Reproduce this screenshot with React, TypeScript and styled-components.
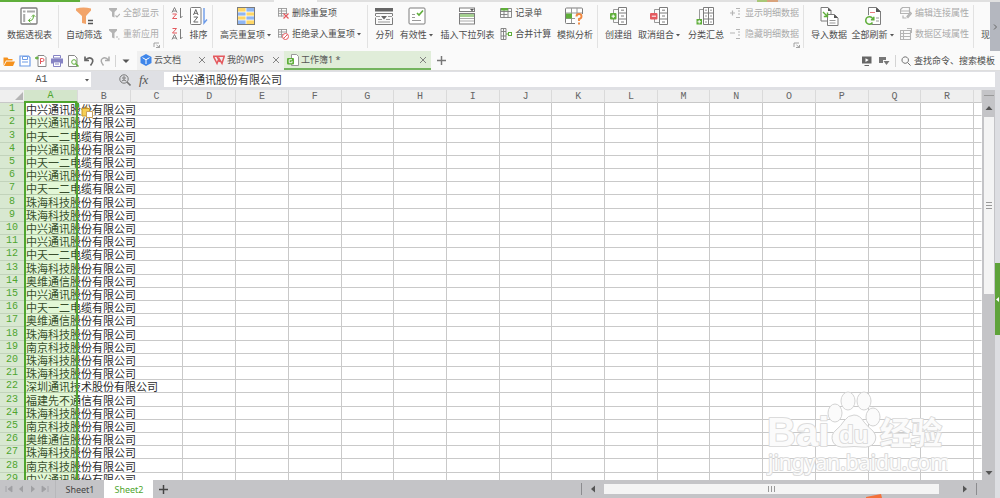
import React from "react";
import styled, { createGlobalStyle } from "styled-components";

const GREEN = "#4fa52f";
const UI = `"Noto Sans", "Noto Sans CJK SC", sans-serif`;
const CJK = `"Noto Sans CJK SC", sans-serif`;
const MONO = `"Liberation Mono", monospace`;

const Global = createGlobalStyle`
  * { box-sizing: border-box; }
  body { margin: 0; background: #fafafa; font-family: ${CJK}; font-size: 9px; color: #4c4c4c; overflow: hidden; }
  button, input { font: inherit; color: inherit; border: 0; padding: 0; margin: 0; background: none; outline: none; border-radius: 0; }
`;

/* ---------- icons ---------- */

const g = "#7c7c7c";
const gl = "#b4b4b4";
const gr = "#5fae3a";
const red = "#e4595e";

const art: Record<string, React.ReactNode> = {
  pivot: (
    <>
      <rect x="1" y="1" width="16" height="16" rx="1" fill="#fff" stroke={g} strokeWidth="1.300" />
      <path d="M3 4.500h2.500M7 4.500h8M4.200 7v8" stroke="#aaa" strokeWidth="2" />
      <path d="M8.500 13.500q5 1 5-5M11.700 9.800l1.800-2 1.800 2M10.400 11.500l-2 2 2 1.800" fill="none" stroke={gr} />
    </>
  ),
  filter: (
    <>
      <path d="M1 1.500q7.500-2 15 0v2L11 9v8l-4-1V9L1 3.500z" fill="#f2a46a" />
      <path d="M13 13.500h5M13 16.500h5" stroke="#555" strokeWidth="1.300" />
    </>
  ),
  filterAll: (
    <>
      <path d="M1 1h8v1.500L6.500 5v5.500L4 9.500V5L1 2.500z" fill={gl} />
      <path d="M7.500 8.500L9 10l3-3" fill="none" stroke={gl} strokeWidth="1.200" />
    </>
  ),
  filterRe: (
    <>
      <path d="M1 1h8v1.500L6.500 5v5.500L4 9.500V5L1 2.500z" fill={gl} />
      <path d="M8 9h2M10 11h1.500" fill="none" stroke={gl} strokeWidth="1.200" />
    </>
  ),
  sortAsc: (
    <>
      <path d="M1 5.500L3.500.5 6 5.500M2 4h3" fill="none" stroke="#777" strokeWidth=".9" />
      <path d="M1.500 7h4l-4 4.500h4.500" fill="none" stroke={red} />
      <path d="M9.500 1v10l2-2" fill="none" stroke={g} />
    </>
  ),
  sortDesc: (
    <>
      <path d="M1.500.5h4L1.500 5h4.500" fill="none" stroke={red} />
      <path d="M1 11.500l2.500-5 2.500 5M2 10h3" fill="none" stroke="#777" strokeWidth=".9" />
      <path d="M9.500 1v10l2-2" fill="none" stroke={g} />
    </>
  ),
  sort: (
    <>
      <rect x="1.500" y=".5" width="10.500" height="17" rx="1" fill="#fff" stroke={g} />
      <path d="M4.500 8l2.300-5.500L9.100 8M5.200 6.300h3.200M4.700 10h4l-4 5h4.500" fill="none" stroke="#666" />
      <path d="M15 1v15l3-3.500" fill="none" stroke="#6c9be8" strokeWidth="1.400" />
    </>
  ),
  highlight: (
    <>
      <rect x=".5" y=".5" width="17" height="17" fill="#8fb6f4" stroke={g} />
      <path d="M1 1h8v4H1zM9 5h8v4H9zM1 9h8v4H1zM9 13h8v4H9z" fill="#ffd766" />
      <path d="M1 5h16M1 9h16M1 13h16M9 1v16" stroke="#fff" strokeWidth=".8" />
    </>
  ),
  dupDel: (
    <>
      <path d="M1 1.500h9M1 4h9M1 6.500h9M1 9h6M1.500 1v8.500M4.500 1v8.500M9.500 1v6" fill="none" stroke="#999" strokeWidth=".9" />
      <path d="M6.500 6.500l5 5M11.500 6.500l-5 5" stroke={red} strokeWidth="1.200" />
    </>
  ),
  dupReject: (
    <>
      <path d="M1 1.500h9M1 4h9M1 6.500h5M1 9h4M1.500 1v8.500M4.500 1v8.500M9.500 1v4" fill="none" stroke="#999" strokeWidth=".9" />
      <circle cx="8.500" cy="8.500" r="3" fill="#fff" stroke={red} />
      <path d="M6.500 10.500l4-4" stroke={red} />
    </>
  ),
  split: (
    <>
      <path d="M0 1h18v3.500H0z" fill="#666" />
      <path d="M.5 9V6.500h17V9M.5 10.500v7h17v-7" fill="none" stroke={g} />
      <path d="M1 9.500h4M13 9.500h4M3 12.500h4M11 12.500h4M3 15h12" stroke="#999" />
      <path d="M6 9h6l-3 3.500z" fill="#666" />
    </>
  ),
  valid: (
    <>
      <rect x="1" y="1" width="16" height="16" rx="1" fill="#fff" stroke={g} />
      <path d="M4 7.500h3M4 10.500h3M4 13.500h9" stroke="#999" fill="none" />
      <path d="M9 6l2 2 4-4.500" fill="none" stroke={gr} strokeWidth="1.600" />
    </>
  ),
  dropList: (
    <>
      <rect x="1.500" y="1" width="15" height="3.500" fill="#fff" stroke={g} />
      <path d="M12 2h4l-2 2.300z" fill="#555" />
      <rect x="1.500" y="6.500" width="15" height="10.500" fill="#fff" stroke={g} />
      <path d="M2 7h14v3H2z" fill="#a5cf91" />
      <path d="M2 11.500h14M2 14h14" stroke="#aaa" />
    </>
  ),
  record: (
    <>
      <path d="M.5 1.500h11v9H.5zM.5 4.500h11M.5 7.500h7M4 2v8.500M8 2v8.500" fill="none" stroke={g} strokeWidth=".9" />
      <path d="M1 1h7v2.500H1z" fill={gr} />
    </>
  ),
  merge: (
    <>
      <path d="M1 .5h5v11H1zM1 3.500h5M1 8h5M3.500.5v11" fill="none" stroke={g} strokeWidth=".9" />
      <path d="M6 6h2" stroke={gr} />
      <rect x="8.500" y="4.500" width="3" height="3" fill="#fff" stroke={gr} />
    </>
  ),
  whatif: (
    <>
      <rect x=".5" y="1" width="17" height="15.500" rx="1" fill="#fff" stroke={g} />
      <path d="M1 6h16M1 11.500h10M6.500 1v15M12 1v6" stroke="#999" />
      <path d="M1 6.500h6v5H1z" fill={gr} />
      <path d="M10 7h8v11h-8z" fill="#fafafa" />
      <path d="M11.500 9.500q0-2.500 2.500-2.500t2.500 2.300-2.500 2.700v2M14 15.500v2" fill="none" stroke="#f0873e" strokeWidth="1.900" />
    </>
  ),
  group: (
    <>
      <path d="M9.500.5h8v17h-8zM9.500 6h8M9.500 12h8M12 3.200h3M12 9h3M12 15h3" fill="#fff" stroke={g} />
      <path d="M9 2.500H4.500V6M4.500 12v3.500H9" fill="none" stroke="#999" />
      <rect x="1" y="6" width="6.500" height="6.500" rx="1" fill={gr} />
      <path d="M2.500 9.200h3.500M4.200 7.500V11" stroke="#fff" />
    </>
  ),
  ungroup: (
    <>
      <path d="M9.500.5h8v17h-8zM9.500 6h8M9.500 12h8M12 3.200h3M12 9h3M12 15h3" fill="#fff" stroke={g} />
      <path d="M9 2.500H4.500V6M4.500 12v3.500H9" fill="none" stroke="#999" />
      <rect x="0" y="6" width="7.500" height="6.500" rx="1" fill={red} />
      <path d="M1.800 9.200H6" stroke="#fff" />
    </>
  ),
  subtotal: (
    <>
      <path d="M7.500.5h10v17h-10zM7.500 6h10M7.500 12h10M12.500 .5v17" fill="#fff" stroke={g} />
      <path d="M9 3.200h2M9 9h2M9 15h2M14 3.200h2M14 9h2M14 15h2" stroke="#999" />
      <path d="M7 2.500H3.500V12" fill="none" stroke="#999" />
      <rect x=".5" y="12" width="5.500" height="5.500" fill={gr} />
      <path d="M1.500 14.800H5M3.200 13v3.500" stroke="#fff" />
    </>
  ),
  showDetail: <path d="M0 6h5M2.500 3.500v5M6 1.500h4M8 4h2M8 7h2M6 10.500h4" stroke={gl} strokeWidth="1.200" />,
  hideDetail: <path d="M0 5h5M6 1.500h4M8 4h2M8 7h2M6 10.500h4" stroke={gl} strokeWidth="1.200" />,
  importData: (
    <>
      <path d="M1 .5h7l3 3V14H1z" fill="#fff" stroke={g} />
      <path d="M7.500 7.500h7l3.500 3.500v7.500H7.500z" fill="#fff" stroke={g} />
      <path d="M8 .5V4h3.500zM14 7.500V11h4z" fill="#555" />
      <path d="M3 5l4 4M7.500 5.500V9.500H3.800" fill="none" stroke={gr} strokeWidth="1.400" />
      <path d="M9.500 13.500h6M9.500 16h6" stroke="#999" />
    </>
  ),
  refresh: (
    <>
      <path d="M4.500.5h8l4 4v13h-12z" fill="#fff" stroke={g} />
      <path d="M12 .5V5h5z" fill="#555" />
      <path d="M6 5.500h5" stroke={red} strokeWidth=".8" />
      <path d="M12 11h3M12 14h3" stroke="#999" />
      <circle cx="5.500" cy="13" r="5" fill="#fafafa" />
      <path d="M9 12.500a3.700 3.700 0 1 0-.5 3M9.800 9.800v3H6.900" fill="none" stroke={gr} strokeWidth="1.500" />
    </>
  ),
  connProp: <path d="M.5 2.500l2-2h7v6h-9zM.5 4h9M3 8.500v2.500h3.500M7 9.500l3.500-4 1 1-3.500 4z" fill="none" stroke={gl} strokeWidth="1.200" />,
  areaProp: <path d="M.5 2.500h10v9H.5zM3.500 2.500v9M.5 5.500h10M.5 8.500h10M7 .5h4.500V5" fill="none" stroke={gl} strokeWidth="1.100" />,
  open: <path d="M.5 10.500v-8h4l1 1.500h4v1.500H3zM3.500 6.500h8.500l-2 4.500H1z" fill="#f5921e" />,
  save: (
    <>
      <path d="M1 1h8.500L11 2.500V11H1z" fill="#fff" stroke="#6d9be6" strokeWidth="1.200" />
      <path d="M3.500 1.500h5v3h-5zM3 7h6" fill="none" stroke="#6d9be6" />
    </>
  ),
  pdf: (
    <>
      <path d="M3 .5h6l2 2v9H3z" fill="#fff" stroke="#888" />
      <path d="M5.500 9V3.500h2q1.500 0 1.500 1.500T7.500 6.500h-2" fill="none" stroke={red} />
      <path d="M0 3h3.500M2 1.500v3" stroke={gr} strokeWidth="1.300" />
    </>
  ),
  print: (
    <>
      <path d="M0 3.500h12v5H0z" fill="#8583c4" />
      <path d="M2.500.5h7V3h-7zM2.500 7h7v4.500h-7z" fill="#fff" stroke="#8583c4" />
      <path d="M4 9h4" stroke="#8583c4" />
    </>
  ),
  preview: (
    <>
      <path d="M1.500.5h6l2.500 2.500v8.500h-8.500z" fill="#fff" stroke="#888" />
      <circle cx="7" cy="7" r="2.300" fill="#fff" stroke={gr} />
      <path d="M8.700 8.700l2.800 2.800" stroke={gr} strokeWidth="1.500" />
    </>
  ),
  undo: <path d="M2 1.500v4h4M2.500 5q3-3.500 6-1.500t-1 7" fill="none" stroke="#666" strokeWidth="1.700" />,
  redo: <path d="M10 1.500v4H6M9.500 5q-3-3.500-6-1.500t1 7" fill="none" stroke="#aaa" strokeWidth="1.500" />,
  cloud: (
    <>
      <path d="M6 0l5.500 3v6L6 12 .5 9V3z" fill="#3f86ea" />
      <path d="M2.500 3.700L6 5.700l3.500-2M6 5.700V10" fill="none" stroke="#fff" />
    </>
  ),
  wps: <path d="M.3 2.200h10.900L9 9.500 6 4.500 4 9.500zM3.800 2.200L6.800 8" fill="none" stroke={red} strokeWidth="1.500" />,
  sheet: (
    <>
      <path d="M4.500.5h5l2 2v9h-7z" fill="#fff" stroke="#999" />
      <rect x="0" y="4" width="7" height="6.500" rx="1" fill={gr} />
      <path d="M5 5.700H2.200v3H5V7" fill="none" stroke="#fff" strokeWidth=".9" />
    </>
  ),
  present: (
    <>
      <path d="M1 1.500h9.500v7H1z" fill="#666" />
      <path d="M3.500 10.500h4.500" stroke="#666" />
      <path d="M4.500 3.300l3.200 1.800-3.200 1.800z" fill="#fff" />
    </>
  ),
  tools: <path d="M1 2h7v3H5v3H1zM5.500 6h6L8.500 10z" fill="#777" />,
  search: <path d="M5 1a3.900 3.900 0 1 0 .1 0zM8 8l3.500 3.500" fill="none" stroke="#666" strokeWidth="1.100" />,
  find: (
    <>
      <circle cx="5" cy="5" r="4.200" fill="none" stroke="#777" />
      <path d="M8 8l3.500 3.500" stroke="#777" strokeWidth="1.600" />
      <circle cx="5" cy="4" r="1.200" fill="none" stroke="#777" />
      <path d="M2.800 7q2.200-2 4.400 0" fill="none" stroke="#777" />
    </>
  ),
  paste: (
    <>
      <path d="M1 2.500h7.500V10H1z" fill="#f6cf55" stroke="#c89a28" />
      <path d="M3.200 2.500q0-2 1.500-2t1.500 2" fill="none" stroke="#c89a28" />
      <path d="M5.500 5.500h6v6h-6z" fill="#fff" stroke="#c9a05a" />
    </>
  ),
  launcher: <path d="M1 5V1h5M3 5.500h3.500V3M3.500 3l3 2.500" fill="none" stroke="#999" strokeWidth=".9" />,
  first: <path d="M1 1v6M7 1v6L3 4z" fill="#a0a0a3" stroke="#a0a0a3" strokeWidth=".8" />,
  prev: <path d="M6 .5v7L2 4z" fill="#a0a0a3" />,
  next: <path d="M2 .5v7L6 4z" fill="#a0a0a3" />,
  last: <path d="M7 1v6M1 1v6l4-3z" fill="#a0a0a3" stroke="#a0a0a3" strokeWidth=".8" />,
  left: <path d="M6 .5v7L2 4z" fill="#555" />,
  right: <path d="M2 .5v7L6 4z" fill="#555" />,
  up: <path d="M.5 6h7L4 2z" fill="#555" />,
  down: <path d="M.5 2h7L4 6z" fill="#555" />,
  caret: <path d="M2 3h4L4 5.500z" fill="#555" />,
  caretBig: <path d="M.5 2.500h7L4 6z" fill="#555" />,
  close: <path d="M1 1l6 6M7 1L1 7" stroke="#777" strokeWidth=".9" />,
  plus: <path d="M0 4h8M4 0v8" stroke="#777" strokeWidth="1.300" />,
  plusDark: <path d="M0 4h8M4 0v8" stroke="#444" strokeWidth="1.300" />,
  more: <path d="M3 1.500L5.500 4 3 6.500" fill="none" stroke="#666" />,
};

const Svg = styled.svg`
  display: block;
  flex: none;
`;

const Icon = ({ name, box = 12, size }: { name: string; box?: number; size?: number }) => (
  <Svg width={size ?? box} height={size ?? box} viewBox={`0 0 ${box} ${box}`} aria-hidden="true">
    {art[name]}
  </Svg>
);

/* ---------- ribbon ---------- */

const Shell = styled.div`
  height: 100vh;
  display: flex;
  flex-direction: column;
`;

const TopStrip = styled.div`
  display: flex;
  height: 2px;
  flex: none;
  background: #e0e0e0;
`;
const StripPart = styled.span<{ $w: number; $c: string }>`
  flex: 0 0 ${(p) => p.$w}px;
  background: ${(p) => p.$c};
`;

const Ribbon = styled.div`
  display: flex;
  height: 49px;
  flex: none;
  background: #fafafa;
`;
const Groups = styled.div`
  display: flex;
  flex: 1;
  min-width: 0;
  overflow: hidden;
`;
const Group = styled.div<{ $w: number }>`
  position: relative;
  flex: 0 0 ${(p) => p.$w}px;
  display: flex;
  justify-content: space-between;
  padding: 4px 5px 0 7px;
  &::after {
    content: "";
    position: absolute;
    right: 0;
    top: 3px;
    bottom: 3px;
    width: 1px;
    background: #e2e2e2;
  }
`;
const BigButton = styled.button`
  display: flex;
  flex-direction: column;
  align-items: center;
  justify-content: flex-start;
  gap: 2px;
  height: 36px;
  padding-top: 1px;
  line-height: 13px;
  white-space: nowrap;
`;
const Label = styled.span`
  display: flex;
  align-items: center;
`;
const Stack = styled.div`
  display: flex;
  flex-direction: column;
  gap: 8px;
`;
const SmallButton = styled.button<{ $dim?: boolean }>`
  display: flex;
  align-items: center;
  gap: 3px;
  height: 13px;
  line-height: 13px;
  white-space: nowrap;
  color: ${(p) => (p.$dim ? "#aaa" : "inherit")};
`;
const Launcher = styled.button`
  position: absolute;
  right: 4px;
  bottom: 2px;
`;
const RibbonMore = styled.button`
  flex: 0 0 10px;
  display: grid;
  place-items: center;
  background: #b4b7bf;
`;

const Big = ({ icon, text, drop }: { icon: string; text: string; drop?: boolean }) => (
  <BigButton>
    <Icon name={icon} box={19} />
    <Label>
      {text}
      {drop && <Icon name="caret" box={8} />}
    </Label>
  </BigButton>
);
const Small = ({ icon, text, drop, dim }: { icon: string; text?: string; drop?: boolean; dim?: boolean }) => (
  <SmallButton $dim={dim} disabled={dim} aria-label={text ?? icon}>
    <Icon name={icon} />
    {text && (
      <Label>
        {text}
        {drop && <Icon name="caret" box={8} />}
      </Label>
    )}
  </SmallButton>
);

/* ---------- quick access and document tabs ---------- */

const TabBar = styled.div`
  display: flex;
  align-items: stretch;
  height: 20px;
  flex: none;
  background: #fafafa;
  border-bottom: 1px solid #dedede;
`;
const Quick = styled.div`
  display: flex;
  align-items: center;
  gap: 4px;
  padding-left: 3px;
  width: 137px;
  flex: none;
`;
const IconButton = styled.button`
  display: grid;
  place-items: center;
  flex: none;
`;
const Rule = styled.span<{ $c?: string }>`
  width: 1px;
  height: 12px;
  flex: none;
  background: ${(p) => p.$c ?? "#d4d4d4"};
`;
const QuickMenu = styled(IconButton)`
  margin-left: 2px;
`;
const DocTab = styled.div<{ $w: number; $active?: boolean }>`
  display: flex;
  align-items: center;
  gap: 2px;
  flex: 0 0 ${(p) => p.$w}px;
  padding: 0 4px 0 3px;
  background: ${(p) => (p.$active ? "#e0edd9" : "#f0f0f0")};
  border-bottom: 2px solid ${(p) => (p.$active ? "#74b45f" : "#f0f0f0")};
`;
const DocName = styled.button`
  flex: 1;
  text-align: left;
  white-space: nowrap;
  font-family: ${UI};
  color: #555;
`;
const Spacer = styled.span`
  flex: 1;
`;
const AddTab = styled(IconButton)`
  width: 20px;
`;
const Tools = styled.div`
  display: flex;
  align-items: center;
  gap: 5px;
  padding-right: 5px;
`;
const SearchButton = styled.button`
  display: flex;
  align-items: center;
  gap: 3px;
  white-space: nowrap;
`;

/* ---------- formula bar ---------- */

const FormulaBar = styled.div`
  display: flex;
  align-items: center;
  height: 19px;
  flex: none;
  padding: 0 5px 2px 0;
  background: #dfe0e4;
`;
const NameBox = styled.div`
  display: flex;
  align-items: center;
  width: 91px;
  height: 15px;
  background: #fff;
`;
const NameInput = styled.input`
  flex: 1;
  min-width: 0;
  text-align: center;
  font-family: ${MONO};
  font-size: 10px;
`;
const FormulaTools = styled.div`
  display: flex;
  align-items: center;
  gap: 8px;
  width: 73px;
  padding-left: 28px;
`;
const Fx = styled.button`
  font: italic 13px/13px "Liberation Serif", serif;
  color: #555;
`;
const FormulaInput = styled.input`
  flex: 1;
  min-width: 0;
  height: 15px;
  padding: 0 8px;
  background: #fff;
  font-family: ${CJK};
  font-size: 11px;
  line-height: 15px;
  color: #333;
`;

/* ---------- sheet ---------- */

const Work = styled.div`
  display: flex;
  flex: 1;
  min-height: 0;
`;
const Main = styled.div`
  flex: 1;
  min-width: 0;
  display: flex;
  flex-direction: column;
`;
const SheetArea = styled.div`
  flex: 1;
  min-height: 0;
  display: flex;
`;
const Viewport = styled.div`
  position: relative;
  flex: 1;
  min-width: 0;
  overflow: hidden;
  background: #fff;
`;
const Grid = styled.table`
  width: 100%;
  table-layout: fixed;
  border-spacing: 0;
  font-size: 11px;
  line-height: 12px;
`;
const Col = styled.col<{ $w?: number }>`
  width: ${(p) => (p.$w ? `${p.$w}px` : "auto")};
`;
const ColHead = styled.th<{ $on?: boolean }>`
  height: 13px;
  padding: 0;
  font: 10px/11px ${MONO};
  color: ${(p) => (p.$on ? GREEN : "#666")};
  background: ${(p) => (p.$on ? "#d3e5cb" : "#efefef")};
  border-right: 1px solid #dadada;
  border-bottom: ${(p) => (p.$on ? `2px solid ${GREEN}` : "1px solid #c8c8c8")};
`;
const Corner = styled(ColHead)`
  border-right: 0;
  svg { margin-left: auto; margin-right: 1px; }
`;
const Row = styled.tr`
  height: 13px;
  &:nth-child(5n + 3) { height: 14px; }
`;
const RowHead = styled.th`
  padding: 0;
  font: 10px/12px ${MONO};
  color: ${GREEN};
  background: #d8e8d1;
  border-bottom: 1px solid #c2d3bb;
`;
const Cell = styled.td<{ $open?: boolean }>`
  padding: 0;
  border-bottom: 1px solid #c9c9c9;
  border-right: 1px solid ${(p) => (p.$open ? "transparent" : "#c9c9c9")};
`;
const Picked = styled.td<{ $active?: boolean }>`
  position: relative;
  padding: 0 0 0 2px;
  white-space: nowrap;
  color: #2c2c2c;
  border-bottom: 1px solid #c9c9c9;
  &::after {
    content: "";
    position: absolute;
    inset: 0 0 -1px 0;
    border: solid ${GREEN};
    border-width: 0 2px;
    background: ${(p) => (p.$active ? "none" : "rgba(110, 215, 50, 0.2)")};
  }
`;
const CellText = styled.span`
  display: block;
  width: 0;
  height: 12px;
`;
const PasteTag = styled.button`
  position: absolute;
  left: 57px;
  top: 3px;
  z-index: 2;
`;
const FillHandle = styled.i`
  position: absolute;
  right: -1px;
  top: 0;
  z-index: 1;
  width: 4px;
  height: 4px;
  background: ${GREEN};
`;

const VScroll = styled.div`
  flex: 0 0 13px;
  display: flex;
  flex-direction: column;
  align-items: center;
  background: #c4c4c7;
  padding: 5px 0 3px;
`;
const SplitBar = styled.span`
  width: 10px;
  height: 1px;
  background: #999;
  margin-bottom: 8px;
`;
const VThumb = styled.span`
  display: flex;
  flex-direction: column;
  align-items: center;
  justify-content: center;
  gap: 2px;
  width: 10px;
  flex: 0 1 177px;
  margin-top: 5px;
  background: #f4f4f4;
`;
const Grip = styled.i<{ $v?: boolean }>`
  width: ${(p) => (p.$v ? 1 : 6)}px;
  height: ${(p) => (p.$v ? 6 : 1)}px;
  background: #999;
`;

const SideStrip = styled.aside`
  flex: 0 0 5px;
  display: flex;
  flex-direction: column;
  padding-top: 173px;
  background: #dddee2;
`;
const SideHandle = styled.button`
  height: 72px;
  display: grid;
  place-items: center;
  background: #5fa33a;
`;

const Footer = styled.div`
  position: relative;
  display: flex;
  align-items: stretch;
  height: 18px;
  flex: none;
  background: #c4c4c7;
`;
const SheetNav = styled.div`
  display: flex;
  align-items: center;
  gap: 4px;
  width: 55px;
  padding-left: 5px;
`;
const SheetTab = styled.button<{ $on?: boolean }>`
  width: 49px;
  font-family: ${UI};
  color: ${(p) => (p.$on ? GREEN : "#444")};
  background: ${(p) => (p.$on ? "#fff" : "none")};
  border-left: 1px solid ${(p) => (p.$on ? "#fff" : "#b8b8bb")};
`;
const HScroll = styled.div`
  flex: 0 0 42%;
  display: flex;
  align-items: center;
  gap: 7px;
  padding: 0 18px 0 4px;
`;
const HThumb = styled.span`
  display: flex;
  align-items: center;
  justify-content: center;
  gap: 2px;
  flex: 1;
  height: 10px;
  margin-right: 15px;
  background: #f4f4f4;
`;
const Bubble = styled.svg`
  position: absolute;
  right: 113px;
  bottom: 0;
`;

const Watermark = styled.svg`
  position: absolute;
  right: 34px;
  bottom: 3px;
  text { fill: #fbfbfb; stroke: #dcdcdc; paint-order: stroke; stroke-linejoin: round; }
  path, ellipse { fill: #fbfbfb; stroke: #d4d4d4; }
`;

const Z1 = "中兴通讯股份有限公司";
const Z2 = "中天一二电缆有限公司";
const ZH = "珠海科技股份有限公司";
const AW = "奥维通信股份有限公司";
const NJ = "南京科技股份有限公司";
const names = [
  Z1, Z1, Z2, Z1, Z2, Z1, Z2, ZH, ZH, Z1, Z1, Z2, ZH, AW, Z1, Z2, AW, ZH, NJ, ZH, ZH,
  "深圳通讯技术股份有限公司", "福建先不通信有限公司", ZH, NJ, AW, ZH, NJ, Z1,
];
const letters = "BCDEFGHIJKLMNOPQR".split("");

export default function App() {
  return (
    <Shell>
      <Global />
      <TopStrip>
        <StripPart $w={80} $c="#5fae3a" />
        <StripPart $w={194} $c="#e0e0e0" />
        <StripPart $w={43} $c="#fafafa" />
        <StripPart $w={440} $c="#e0e0e0" />
        <StripPart $w={10} $c="#a9c878" />
        <StripPart $w={11} $c="#d9a37c" />
        <StripPart $w={52} $c="#d2d2d2" />
      </TopStrip>
      <Ribbon>
        <Groups>
          <Group $w={59}>
            <Big icon="pivot" text="数据透视表" />
          </Group>
          <Group $w={105}>
            <Big icon="filter" text="自动筛选" />
            <Stack>
              <Small icon="filterAll" text="全部显示" dim />
              <Small icon="filterRe" text="重新应用" dim />
            </Stack>
            <Launcher aria-label="筛选设置"><Icon name="launcher" box={7} /></Launcher>
          </Group>
          <Group $w={49}>
            <Stack>
              <Small icon="sortAsc" />
              <Small icon="sortDesc" />
            </Stack>
            <Big icon="sort" text="排序" />
          </Group>
          <Group $w={155}>
            <Big icon="highlight" text="高亮重复项" drop />
            <Stack>
              <Small icon="dupDel" text="删除重复项" />
              <Small icon="dupReject" text="拒绝录入重复项" drop />
            </Stack>
          </Group>
          <Group $w={230}>
            <Big icon="split" text="分列" />
            <Big icon="valid" text="有效性" drop />
            <Big icon="dropList" text="插入下拉列表" />
            <Stack>
              <Small icon="record" text="记录单" />
              <Small icon="merge" text="合并计算" />
            </Stack>
            <Big icon="whatif" text="模拟分析" />
          </Group>
          <Group $w={206}>
            <Big icon="group" text="创建组" />
            <Big icon="ungroup" text="取消组合" drop />
            <Big icon="subtotal" text="分类汇总" />
            <Stack>
              <Small icon="showDetail" text="显示明细数据" dim />
              <Small icon="hideDetail" text="隐藏明细数据" dim />
            </Stack>
            <Launcher aria-label="分级设置"><Icon name="launcher" box={7} /></Launcher>
          </Group>
          <Group $w={170}>
            <Big icon="importData" text="导入数据" />
            <Big icon="refresh" text="全部刷新" drop />
            <Stack>
              <Small icon="connProp" text="编辑连接属性" dim />
              <Small icon="areaProp" text="数据区域属性" dim />
            </Stack>
          </Group>
          <Group $w={60}>
            <Big icon="none" text="现有连接" />
          </Group>
        </Groups>
        <RibbonMore aria-label="更多"><Icon name="more" box={8} /></RibbonMore>
      </Ribbon>

      <TabBar>
        <Quick>
          {["open", "save", "pdf", "print", "preview", "undo", "redo"].map((n) => (
            <IconButton key={n} aria-label={n}><Icon name={n} /></IconButton>
          ))}
          <Rule />
          <QuickMenu aria-label="自定义"><Icon name="caretBig" box={8} /></QuickMenu>
        </Quick>
        <DocTab $w={73}>
          <Icon name="cloud" />
          <DocName>云文档</DocName>
          <IconButton aria-label="关闭云文档"><Icon name="close" box={8} /></IconButton>
        </DocTab>
        <DocTab $w={74}>
          <Icon name="wps" />
          <DocName>我的WPS</DocName>
          <IconButton aria-label="关闭我的WPS"><Icon name="close" box={8} /></IconButton>
        </DocTab>
        <DocTab $w={147} $active>
          <Icon name="sheet" />
          <DocName>工作簿1 *</DocName>
          <IconButton aria-label="关闭工作簿1"><Icon name="close" box={8} /></IconButton>
        </DocTab>
        <AddTab aria-label="新建"><Icon name="plus" box={8} size={9} /></AddTab>
        <Spacer />
        <Tools>
          <IconButton aria-label="演示"><Icon name="present" /></IconButton>
          <IconButton aria-label="工具"><Icon name="tools" /></IconButton>
          <Rule />
          <SearchButton><Icon name="search" size={10} />查找命令、搜索模板</SearchButton>
        </Tools>
      </TabBar>

      <FormulaBar>
        <NameBox>
          <NameInput aria-label="名称框" defaultValue="A1" />
          <IconButton aria-label="名称列表"><Icon name="caret" box={8} /></IconButton>
        </NameBox>
        <FormulaTools>
          <IconButton aria-label="浏览公式"><Icon name="find" /></IconButton>
          <Fx>fx</Fx>
        </FormulaTools>
        <FormulaInput aria-label="编辑栏" defaultValue={Z1} />
      </FormulaBar>

      <Work>
        <Main>
          <SheetArea>
            <Viewport>
              <Grid>
                <colgroup>
                  <Col $w={24} />
                  <Col $w={54} />
                  {letters.map((l) => <Col key={l} />)}
                  <Col $w={8} />
                </colgroup>
                <thead>
                  <tr>
                    <Corner>
                      <Svg width="8" height="8" viewBox="0 0 8 8"><path d="M8 0v8H0z" fill="#b5b5b5" /></Svg>
                    </Corner>
                    <ColHead $on>A</ColHead>
                    {letters.map((l) => <ColHead key={l}>{l}</ColHead>)}
                    <ColHead />
                  </tr>
                </thead>
                <tbody>
                  {names.map((n, i) => (
                    <Row key={i}>
                      <RowHead>{i + 1}</RowHead>
                      <Picked $active={i === 0}>
                        <CellText>{n}</CellText>
                        {i === 0 && <FillHandle />}
                        {i === 0 && <PasteTag aria-label="粘贴选项"><Icon name="paste" /></PasteTag>}
                      </Picked>
                      {letters.map((l) => <Cell key={l} $open={l === "B"} />)}
                      <Cell $open />
                    </Row>
                  ))}
                </tbody>
              </Grid>
              <Watermark width="182" height="90" viewBox="0 0 182 90">
                <text x="1" y="59" fontFamily="Liberation Sans" fontWeight="700" fontSize="40" strokeWidth="2">Bai</text>
                <ellipse cx="69" cy="26" rx="7" ry="9" />
                <ellipse cx="82" cy="14" rx="7" ry="9" />
                <ellipse cx="98" cy="14" rx="7" ry="9" />
                <ellipse cx="107" cy="30" rx="7" ry="9" />
                <path d="M88 28q6 0 10 7 4 5 9 9 5 6 1 12-4 5-12 4-8-1-16 0-10 1-13-5-3-7 3-12 5-4 8-9 4-6 10-6z" />
                <text x="73" y="56" fontFamily="Liberation Sans" fontWeight="700" fontSize="24" strokeWidth="2">du</text>
                <text x="114" y="57" fontFamily="Noto Sans CJK SC" fontWeight="700" fontSize="31" strokeWidth="2">经验</text>
                <text x="2" y="83" fontFamily="Noto Sans" fontSize="21" strokeWidth="2">jingyan.baidu.com</text>
              </Watermark>
            </Viewport>
            <VScroll>
              <SplitBar />
              <IconButton aria-label="向上滚动"><Icon name="up" box={8} /></IconButton>
              <VThumb><Grip /><Grip /><Grip /></VThumb>
              <Spacer />
              <IconButton aria-label="向下滚动"><Icon name="down" box={8} /></IconButton>
            </VScroll>
          </SheetArea>
          <Footer>
            <SheetNav>
              {["first", "prev", "next", "last"].map((n) => (
                <IconButton key={n} aria-label={n}><Icon name={n} box={8} /></IconButton>
              ))}
            </SheetNav>
            <SheetTab>Sheet1</SheetTab>
            <SheetTab $on>Sheet2</SheetTab>
            <AddTab aria-label="新建工作表"><Icon name="plusDark" box={8} size={9} /></AddTab>
            <Spacer />
            <HScroll>
              <Rule $c="#8c8c8f" />
              <IconButton aria-label="向左滚动"><Icon name="left" box={8} /></IconButton>
              <HThumb><Grip $v /><Grip $v /><Grip $v /></HThumb>
              <IconButton aria-label="向右滚动"><Icon name="right" box={8} /></IconButton>
              <Rule $c="#8c8c8f" />
            </HScroll>
            <Bubble width="17" height="4" viewBox="0 0 17 4"><path d="M1 4V3L16 0l1 4z" fill="#f4713a" /></Bubble>
          </Footer>
        </Main>
        <SideStrip>
          <SideHandle aria-label="展开侧栏">
            <Svg width="3" height="5" viewBox="0 0 3 5"><path d="M3 0v5L0 2.500z" fill="#fff" /></Svg>
          </SideHandle>
        </SideStrip>
      </Work>
    </Shell>
  );
}
